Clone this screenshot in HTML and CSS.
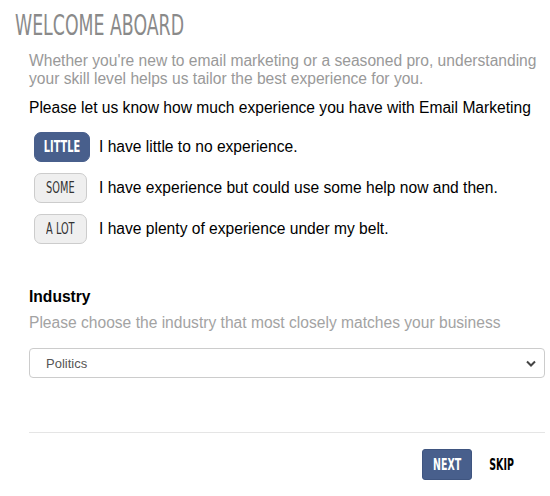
FILE: index.html
```html
<!DOCTYPE html>
<html>
<head>
<meta charset="utf-8">
<link rel="stylesheet" href="styles.css">
</head>
<body>
<div class="page">
  <h1 class="title"><span>WELCOME ABOARD</span></h1>
  <div class="content">
    <p class="intro">Whether you're new to email marketing or a seasoned pro, understanding your skill level helps us tailor the best experience for you.</p>
    <p class="question">Please let us know how much experience you have with Email Marketing</p>
    <div class="levels">
      <div class="level"><button class="pill active"><span>LITTLE</span></button><span>I have little to no experience.</span></div>
      <div class="level"><button class="pill"><span>SOME</span></button><span>I have experience but could use some help now and then.</span></div>
      <div class="level"><button class="pill"><span>A LOT</span></button><span>I have plenty of experience under my belt.</span></div>
    </div>
    <h2 class="label">Industry</h2>
    <p class="hint">Please choose the industry that most closely matches your business</p>
    <div class="select">
      <span>Politics</span>
      <svg width="10" height="7" viewBox="0 0 10 7"><path d="M1 1.5 L5 5.5 L9 1.5" fill="none" stroke="#444" stroke-width="2"/></svg>
    </div>
    <div class="footer">
      <button class="next"><span>NEXT</span></button>
      <button class="skip"><span>SKIP</span></button>
    </div>
  </div>
</div>
</body>
</html>
```

FILE: styles.css
```css
html, body {
  margin: 0;
  padding: 0;
  background: #fff;
}
.page {
  padding: 9px 5px 0 15px;
  font-family: "Liberation Sans", Arial, sans-serif;
}
.title {
  margin: 0;
  height: 32px;
  font-family: "DejaVu Sans Condensed", "DejaVu Sans", sans-serif;
  font-weight: normal;
  font-size: 29px;
  line-height: 32px;
  color: #8a8a8a;
  white-space: nowrap;
}
.title span {
  display: inline-block;
  transform: scaleX(0.665);
  transform-origin: left center;
}
.content {
  margin-left: 14px;
}
.intro {
  margin: 11px 0 0;
  font-size: 15.6px;
  line-height: 18px;
  color: #999;
}
.question {
  margin: 11px 0 0;
  font-size: 15.6px;
  line-height: 18px;
  color: #000;
}
.levels {
  margin-top: 15px;
  display: flex;
  flex-direction: column;
  gap: 11px;
  padding-left: 5px;
}
.level {
  display: grid;
  grid-template-columns: 65px 1fr;
  align-items: center;
  font-size: 15.6px;
  color: #000;
}
.pill {
  height: 30px;
  width: 53px;
  padding: 0;
  border: 1px solid #ccc;
  border-radius: 7px;
  background: #efefef;
  color: #333;
  font-family: "DejaVu Sans Condensed", "DejaVu Sans", sans-serif;
  font-size: 15.5px;
  box-sizing: border-box;
  display: flex;
  align-items: center;
  justify-content: center;
}
.pill span, .next span, .skip span {
  display: inline-block;
  transform: scaleX(0.7);
  white-space: nowrap;
}
.pill.active {
  width: 56px;
  background: #485f8c;
  border-color: #485f8c;
  color: #fff;
  font-weight: bold;
}
.label {
  margin: 44px 0 0;
  font-size: 15.6px;
  line-height: 18px;
  font-weight: bold;
  color: #000;
}
.hint {
  margin: 8px 0 0;
  font-size: 15.6px;
  line-height: 18px;
  color: #a3a3a3;
}
.select {
  margin-top: 16px;
  height: 30px;
  box-sizing: border-box;
  border: 1px solid #ccc;
  border-radius: 4px;
  display: flex;
  align-items: center;
  justify-content: space-between;
  padding: 0 8px 0 16px;
  font-size: 13px;
  color: #555;
}
.footer {
  margin-top: 54px;
  border-top: 1px solid #e5e5e5;
  padding-top: 16px;
  display: flex;
  justify-content: flex-end;
  align-items: center;
  padding-right: 32px;
}
.next {
  width: 50px;
  height: 31px;
  background: #485f8c;
  border: 1px solid #3f5580;
  border-radius: 3px;
  color: #fff;
  font-family: "DejaVu Sans Condensed", "DejaVu Sans", sans-serif;
  font-size: 15px;
  font-weight: bold;
  padding: 0;
  display: flex;
  align-items: center;
  justify-content: center;
}
.skip {
  background: none;
  border: none;
  padding: 0;
  margin-left: 18px;
  width: 23px;
  color: #000;
  font-family: "DejaVu Sans Condensed", "DejaVu Sans", sans-serif;
  font-size: 15px;
  font-weight: bold;
  display: flex;
  justify-content: center;
}
```
